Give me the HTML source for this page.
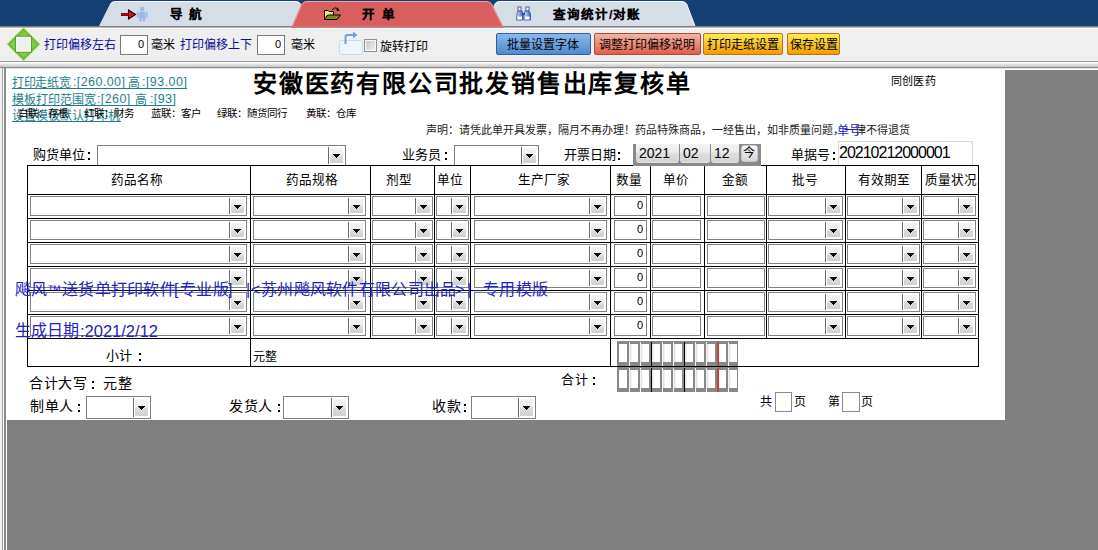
<!DOCTYPE html>
<html lang="zh-CN"><head><meta charset="utf-8">
<style>
html,body{margin:0;padding:0}
body{width:1098px;height:550px;position:relative;overflow:hidden;background:#efefef;font-family:"Liberation Sans",sans-serif}
.t{position:absolute;white-space:nowrap;line-height:1;margin-top:1px}
.tri{position:absolute;width:0;height:0;border-left:3.5px solid transparent;border-right:3.5px solid transparent;border-top:4px solid #000}
</style></head><body>

<div style="position:absolute;left:0px;top:0px;width:1098px;height:26px;box-sizing:border-box;background:#143f72"></div>
<svg style="position:absolute;left:0;top:0" width="1098" height="30">
<path d="M99,26 L110,4 Q112,1 116,1 L295,1 Q299,1 301,4 L311,26 Z" fill="#d5dde6"/>
<path d="M110.5,4 Q112.5,1.5 116,1.5 L295,1.5 Q298.5,1.5 300.5,4" stroke="#f7f9fc" stroke-width="1" fill="none"/>
<path d="M484,26 L494,5 Q496,1 500,1 L681,1 Q685,1 687,4 L695,26 Z" fill="#d5dde6"/>
<path d="M494.5,5 Q496.5,1.5 500,1.5 L681,1.5 Q684.5,1.5 686.5,4 L695,26" stroke="#f7f9fc" stroke-width="1" fill="none"/>
<path d="M292,26 L301,5 Q303,1 307,1 L486,1 Q490,1 492,4 L503,26 Z" fill="#d95f5e"/>
<path d="M292.5,26 L301.5,5 Q303.5,1.5 307,1.5 L486,1.5 Q489.5,1.5 491.5,4 L502.5,26" stroke="#eda4a3" stroke-width="1" fill="none"/>
</svg>
<div style="position:absolute;left:0px;top:26px;width:1098px;height:1px;box-sizing:border-box;background:#7b7d80"></div>
<div style="position:absolute;left:0px;top:27px;width:1098px;height:1px;box-sizing:border-box;background:#b9babc"></div>
<div style="position:absolute;left:291px;top:26px;width:213px;height:2px;box-sizing:border-box;background:#c97d7c"></div>
<div style="position:absolute;left:0px;top:28px;width:1098px;height:1px;box-sizing:border-box;background:#ffffff"></div>
<svg style="position:absolute;left:120px;top:6px" width="30" height="16" viewBox="0 0 30 16">
<rect x="1" y="7" width="8" height="3" fill="#600"/>
<rect x="1.5" y="7.6" width="7" height="1.8" fill="#c00"/>
<path d="M8.5,4 L15.5,8.5 L8.5,13 Z" fill="#e81010" stroke="#200" stroke-width="1.1" stroke-linejoin="miter"/>
<circle cx="22.3" cy="3" r="2.3" fill="#98bbe8"/>
<rect x="19.2" y="5.8" width="6.2" height="6.5" fill="#98bbe8"/>
<rect x="17" y="5.8" width="1.6" height="6" fill="#98bbe8"/>
<rect x="26" y="5.8" width="1.6" height="6" fill="#98bbe8"/>
<rect x="19.4" y="12" width="2.4" height="3.2" fill="#98bbe8"/>
<rect x="22.8" y="12" width="2.4" height="3.2" fill="#98bbe8"/>
</svg>
<div class="t" style="left:170px;top:8px;font-size:12.5px;color:#000;font-weight:bold;-webkit-text-stroke:0.15px #000">导</div>
<div class="t" style="left:189px;top:8px;font-size:12.5px;color:#000;font-weight:bold;-webkit-text-stroke:0.15px #000">航</div>
<svg style="position:absolute;left:324px;top:6px" width="18" height="16" viewBox="0 0 18 16">
<defs><pattern id="hatch" width="2" height="2" patternUnits="userSpaceOnUse"><rect width="2" height="2" fill="#f0d860"/><rect width="1" height="1" fill="#fff8b0"/><rect x="1" y="1" width="1" height="1" fill="#fff8b0"/></pattern></defs>
<path d="M0.5,4.5 L4,4.5 L5,5.5 L9.5,5.5 L9.5,13.5 L0.5,13.5 Z" fill="url(#hatch)" stroke="#000" stroke-width="1"/>
<path d="M0.5,13.5 L3.5,9 L16.5,9 L13,13.5 Z" fill="#7e8a1c" stroke="#000" stroke-width="1"/>
<path d="M8,4 Q10.5,0.5 14,2.5" stroke="#000" stroke-width="1" fill="none"/>
<path d="M13,1.5 L16,4.5 L12.5,5 Z" fill="#000"/>
</svg>
<div class="t" style="left:362px;top:8px;font-size:12.5px;color:#000;font-weight:bold;-webkit-text-stroke:0.15px #000">开</div>
<div class="t" style="left:382px;top:8px;font-size:12.5px;color:#000;font-weight:bold;-webkit-text-stroke:0.15px #000">单</div>
<svg style="position:absolute;left:515px;top:6px" width="18" height="16" viewBox="0 0 18 16">
<defs><linearGradient id="bg1" x1="0" x2="1"><stop offset="0" stop-color="#dbe8fb"/><stop offset="0.5" stop-color="#7fa3e0"/><stop offset="1" stop-color="#3d62b8"/></linearGradient></defs>
<rect x="3" y="1" width="3" height="4" fill="#fff" stroke="#3a4f90" stroke-width="0.9"/>
<rect x="11" y="1" width="3" height="4" fill="#fff" stroke="#3a4f90" stroke-width="0.9"/>
<path d="M2,8 L3,5 L7,5 L8,8 L8,14 L1.5,14 Z" fill="url(#bg1)" stroke="#2e4a9a" stroke-width="0.8"/>
<path d="M9,8 L10,5 L14,5 L15.5,8 L15.5,14 L9,14 Z" fill="url(#bg1)" stroke="#2e4a9a" stroke-width="0.8"/>
<rect x="2.5" y="10.5" width="4.5" height="3" fill="#f4f8ff"/>
<rect x="10" y="10.5" width="4.5" height="3" fill="#f4f8ff"/>
<rect x="7" y="7" width="3" height="2" fill="#2e4a9a"/>
</svg>
<div class="t" style="left:553px;top:8px;font-size:12.5px;color:#000;font-weight:bold;-webkit-text-stroke:0.15px #000;letter-spacing:1px">查询统计/对账</div>
<svg style="position:absolute;left:6px;top:27px" width="36" height="36" viewBox="0 0 36 36">
<path d="M17.5,0.8 L34,17.3 L17.5,33.8 L1,17.3 Z" fill="#6cb832" stroke="#b6ec86" stroke-width="0.9"/>
<path d="M17.5,4 L24,10 L11,10 Z" fill="#84cc40"/>
<path d="M17.5,30.5 L24,24.5 L11,24.5 Z" fill="#84cc40"/>
<path d="M4,17.3 L10,11 L10,23.5 Z" fill="#84cc40"/>
<path d="M31,17.3 L25,11 L25,23.5 Z" fill="#84cc40"/>
<rect x="9.7" y="9.3" width="15.6" height="15.8" fill="#f0f0f0" stroke="#4e8f22" stroke-width="1"/>
<rect x="10.7" y="10.3" width="13.6" height="13.8" fill="none" stroke="#f4ffe8" stroke-width="1"/>
</svg>
<div class="t" style="left:44px;top:38px;font-size:12px;color:#0c0c98;">打印偏移左右</div>
<div style="position:absolute;left:120px;top:35px;width:28px;height:20px;box-sizing:border-box;border:1px solid #7a7a7a;background:#fff"></div>
<div class="t" style="left:138px;top:38px;font-size:11px;color:#000;">0</div>
<div class="t" style="left:151px;top:38px;font-size:12px;color:#000;">毫米</div>
<div class="t" style="left:180px;top:38px;font-size:12px;color:#0c0c98;">打印偏移上下</div>
<div style="position:absolute;left:257px;top:35px;width:28px;height:20px;box-sizing:border-box;border:1px solid #7a7a7a;background:#fff"></div>
<div class="t" style="left:275px;top:38px;font-size:11px;color:#000;">0</div>
<div class="t" style="left:291px;top:38px;font-size:12px;color:#000;">毫米</div>
<svg style="position:absolute;left:338px;top:30px" width="26" height="26" viewBox="0 0 26 26">
<rect x="1.5" y="10.5" width="23" height="14" rx="2" fill="#eef4fb" stroke="#cfd9e5"/>
<path d="M7.5,14 L7.5,7 Q7.5,5 9.5,5 L16,5" stroke="#6f9fd6" stroke-width="2" fill="none"/>
<path d="M15,1.5 L19.5,5 L15,8.5 Z" fill="#6f9fd6"/>
</svg>
<div style="position:absolute;left:364px;top:39px;width:13px;height:13px;box-sizing:border-box;border:1px solid #8f8f8f;background:linear-gradient(135deg,#d0d0d0,#f4f4f4)"></div>
<div style="position:absolute;left:365px;top:40px;width:11px;height:11px;box-sizing:border-box;border:1px solid #f8f8f8;background:linear-gradient(135deg,#c8c8c8,#f0f0f0)"></div>
<div class="t" style="left:380px;top:40px;font-size:12px;color:#000;">旋转打印</div>
<div style="position:absolute;left:496px;top:33px;width:95px;height:22px;box-sizing:border-box;border:1px solid #2f5e9a;border-radius:2px;background:linear-gradient(#8ab8ea,#4f8bd2)"></div><div class="t" style="left:507px;top:38px;font-size:12px;color:#000;">批量设置字体</div>
<div style="position:absolute;left:594px;top:33px;width:107px;height:22px;box-sizing:border-box;border:1px solid #b04a38;border-radius:2px;background:linear-gradient(#f4b4a4,#e0604a)"></div><div class="t" style="left:599px;top:38px;font-size:12px;color:#000;">调整打印偏移说明</div>
<div style="position:absolute;left:703px;top:33px;width:80px;height:22px;box-sizing:border-box;border:1px solid #b8741e;border-radius:2px;background:linear-gradient(#ffec50,#f59a00)"></div><div class="t" style="left:707px;top:38px;font-size:12px;color:#000;">打印走纸设置</div>
<div style="position:absolute;left:787px;top:33px;width:53px;height:22px;box-sizing:border-box;border:1px solid #b8741e;border-radius:2px;background:linear-gradient(#ffec50,#f59a00)"></div><div class="t" style="left:790px;top:38px;font-size:12px;color:#000;">保存设置</div>
<div style="position:absolute;left:0px;top:61px;width:1098px;height:1px;box-sizing:border-box;background:#979797"></div>
<div style="position:absolute;left:0px;top:62px;width:1098px;height:1px;box-sizing:border-box;background:#ffffff"></div>
<div style="position:absolute;left:0px;top:63px;width:1098px;height:1px;box-sizing:border-box;background:#f1f0ec"></div>
<div style="position:absolute;left:0px;top:64px;width:1098px;height:1px;box-sizing:border-box;background:#e0e0e0"></div>
<div style="position:absolute;left:0px;top:65px;width:1098px;height:1px;box-sizing:border-box;background:#d6d6d6"></div>
<div style="position:absolute;left:0px;top:66px;width:1098px;height:1px;box-sizing:border-box;background:#cbcbcb"></div>
<div style="position:absolute;left:0px;top:67px;width:1098px;height:1px;box-sizing:border-box;background:#8a8a8a"></div>
<div style="position:absolute;left:0px;top:68px;width:1098px;height:1px;box-sizing:border-box;background:#e6e6e6"></div>
<div style="position:absolute;left:0px;top:69px;width:1098px;height:481px;box-sizing:border-box;background:#808080"></div>
<div style="position:absolute;left:0px;top:69px;width:2px;height:481px;box-sizing:border-box;background:#f0f0f0"></div>
<div style="position:absolute;left:2px;top:66px;width:1px;height:484px;box-sizing:border-box;background:#a0a0a0"></div>
<div style="position:absolute;left:3px;top:69px;width:1px;height:481px;box-sizing:border-box;background:#ffffff"></div>
<div style="position:absolute;left:4px;top:67px;width:2px;height:483px;box-sizing:border-box;background:#8a8a8a"></div>
<div style="position:absolute;left:6px;top:69px;width:1px;height:481px;box-sizing:border-box;background:#ffffff"></div>
<div style="position:absolute;left:7px;top:69px;width:998px;height:351px;box-sizing:border-box;background:#ffffff"></div>
<div style="position:absolute;left:7px;top:69px;width:1091px;height:1px;box-sizing:border-box;background:#ffffff"></div>
<div class="t" style="left:253px;top:71px;font-size:24px;color:#000;font-family:'Liberation Serif',serif;font-weight:bold;letter-spacing:1.8px">安徽医药有限公司批发销售出库复核单</div>
<div class="t" style="left:891px;top:75px;font-size:11px;color:#000;letter-spacing:0.2px">同创医药</div>
<div class="t" style="left:12px;top:76px;font-size:12px;color:#1f7f8c;letter-spacing:-0.3px">打印走纸宽</div>
<div class="t" style="left:73px;top:75px;font-size:12.5px;color:#1f7f8c;letter-spacing:0.4px">:[260.00]</div>
<div class="t" style="left:128px;top:76px;font-size:12px;color:#1f7f8c;">高</div>
<div class="t" style="left:142px;top:75px;font-size:12.5px;color:#1f7f8c;letter-spacing:0.45px">:[93.00]</div>
<div style="position:absolute;left:12px;top:88px;width:175px;height:1px;box-sizing:border-box;background:#1f7f8c"></div>
<div class="t" style="left:12px;top:93px;font-size:12px;color:#1f7f8c;">模板打印范围宽</div>
<div class="t" style="left:97px;top:92px;font-size:12.5px;color:#1f7f8c;letter-spacing:0.4px">:[260]</div>
<div class="t" style="left:135px;top:93px;font-size:12px;color:#1f7f8c;">高</div>
<div class="t" style="left:150px;top:92px;font-size:12.5px;color:#1f7f8c;letter-spacing:0.4px">:[93]</div>
<div style="position:absolute;left:12px;top:105px;width:163px;height:1px;box-sizing:border-box;background:#1f7f8c"></div>
<div class="t" style="left:12px;top:109px;font-size:12px;color:#1f7f8c;">设置模板默认打印机</div>
<div style="position:absolute;left:12px;top:121px;width:109px;height:1px;box-sizing:border-box;background:#1f7f8c"></div>
<div class="t" style="left:18px;top:107px;font-size:10.5px;color:#000;">白联：存根</div>
<div class="t" style="left:84px;top:107px;font-size:10.5px;color:#000;">红联：财务</div>
<div class="t" style="left:151px;top:107px;font-size:10.5px;color:#000;">蓝联：客户</div>
<div class="t" style="left:217px;top:107px;font-size:10.5px;color:#000;">绿联：随货同行</div>
<div class="t" style="left:306px;top:107px;font-size:10.5px;color:#000;">黄联：仓库</div>
<div class="t" style="left:426px;top:123px;font-size:11px;color:#222;letter-spacing:0px;margin-top:2px">声明：请凭此单开具发票，隔月不再办理！药品特殊商品，一经售出，如非质量问题，一律不得退货</div>
<div class="t" style="left:837px;top:124px;font-size:12px;color:#1c1cc8;">单号</div>
<div class="t" style="left:33px;top:147px;font-size:13px;color:#000;">购货单位</div><div style="position:absolute;left:88px;top:152px;width:2px;height:2px;box-sizing:border-box;background:#000"></div><div style="position:absolute;left:88px;top:158px;width:2px;height:2px;box-sizing:border-box;background:#000"></div>
<div style="position:absolute;left:97px;top:145px;width:249px;height:21px;box-sizing:border-box;border:1px solid #808080;background:#fff"></div><div style="position:absolute;left:328px;top:147px;width:1px;height:17px;box-sizing:border-box;background:#6a6a6a"></div><div style="position:absolute;left:330px;top:148px;width:13px;height:15px;box-sizing:border-box;background:linear-gradient(#f4f4f4,#ededed 45%,#dcdcdc 55%,#d0d0d0)"></div><div style="position:absolute;left:333px;top:154px;width:7px;height:1px;box-sizing:border-box;background:#000"></div><div style="position:absolute;left:334px;top:155px;width:5px;height:1px;box-sizing:border-box;background:#000"></div><div style="position:absolute;left:335px;top:156px;width:3px;height:1px;box-sizing:border-box;background:#000"></div><div style="position:absolute;left:336px;top:157px;width:1px;height:1px;box-sizing:border-box;background:#000"></div>
<div class="t" style="left:402px;top:147px;font-size:13px;color:#000;">业务员</div><div style="position:absolute;left:445px;top:152px;width:2px;height:2px;box-sizing:border-box;background:#000"></div><div style="position:absolute;left:445px;top:158px;width:2px;height:2px;box-sizing:border-box;background:#000"></div>
<div style="position:absolute;left:454px;top:145px;width:85px;height:21px;box-sizing:border-box;border:1px solid #808080;background:#fff"></div><div style="position:absolute;left:521px;top:147px;width:1px;height:17px;box-sizing:border-box;background:#6a6a6a"></div><div style="position:absolute;left:523px;top:148px;width:13px;height:15px;box-sizing:border-box;background:linear-gradient(#f4f4f4,#ededed 45%,#dcdcdc 55%,#d0d0d0)"></div><div style="position:absolute;left:526px;top:154px;width:7px;height:1px;box-sizing:border-box;background:#000"></div><div style="position:absolute;left:527px;top:155px;width:5px;height:1px;box-sizing:border-box;background:#000"></div><div style="position:absolute;left:528px;top:156px;width:3px;height:1px;box-sizing:border-box;background:#000"></div><div style="position:absolute;left:529px;top:157px;width:1px;height:1px;box-sizing:border-box;background:#000"></div>
<div class="t" style="left:564px;top:147px;font-size:13px;color:#000;">开票日期</div><div style="position:absolute;left:618px;top:152px;width:2px;height:2px;box-sizing:border-box;background:#000"></div><div style="position:absolute;left:618px;top:158px;width:2px;height:2px;box-sizing:border-box;background:#000"></div>
<div class="t" style="left:791px;top:147px;font-size:13px;color:#000;">单据号</div><div style="position:absolute;left:833px;top:152px;width:2px;height:2px;box-sizing:border-box;background:#000"></div><div style="position:absolute;left:833px;top:158px;width:2px;height:2px;box-sizing:border-box;background:#000"></div>
<div style="position:absolute;left:838px;top:141px;width:135px;height:25px;box-sizing:border-box;border:1px solid #d6d6d6;background:#fff"></div>
<div class="t" style="left:839px;top:144px;font-size:16px;color:#000;letter-spacing:-1px">20210212000001</div>
<div style="position:absolute;left:30px;top:196px;width:217px;height:20px;box-sizing:border-box;border:1px solid #808080;background:#fff"></div><div style="position:absolute;left:229px;top:198px;width:1px;height:16px;box-sizing:border-box;background:#6a6a6a"></div><div style="position:absolute;left:231px;top:199px;width:13px;height:14px;box-sizing:border-box;background:linear-gradient(#f4f4f4,#ededed 45%,#dcdcdc 55%,#d0d0d0)"></div><div style="position:absolute;left:234px;top:205px;width:7px;height:1px;box-sizing:border-box;background:#000"></div><div style="position:absolute;left:235px;top:206px;width:5px;height:1px;box-sizing:border-box;background:#000"></div><div style="position:absolute;left:236px;top:207px;width:3px;height:1px;box-sizing:border-box;background:#000"></div><div style="position:absolute;left:237px;top:208px;width:1px;height:1px;box-sizing:border-box;background:#000"></div>
<div style="position:absolute;left:253px;top:196px;width:113px;height:20px;box-sizing:border-box;border:1px solid #808080;background:#fff"></div><div style="position:absolute;left:348px;top:198px;width:1px;height:16px;box-sizing:border-box;background:#6a6a6a"></div><div style="position:absolute;left:350px;top:199px;width:13px;height:14px;box-sizing:border-box;background:linear-gradient(#f4f4f4,#ededed 45%,#dcdcdc 55%,#d0d0d0)"></div><div style="position:absolute;left:353px;top:205px;width:7px;height:1px;box-sizing:border-box;background:#000"></div><div style="position:absolute;left:354px;top:206px;width:5px;height:1px;box-sizing:border-box;background:#000"></div><div style="position:absolute;left:355px;top:207px;width:3px;height:1px;box-sizing:border-box;background:#000"></div><div style="position:absolute;left:356px;top:208px;width:1px;height:1px;box-sizing:border-box;background:#000"></div>
<div style="position:absolute;left:372px;top:196px;width:61px;height:20px;box-sizing:border-box;border:1px solid #808080;background:#fff"></div><div style="position:absolute;left:415px;top:198px;width:1px;height:16px;box-sizing:border-box;background:#6a6a6a"></div><div style="position:absolute;left:417px;top:199px;width:13px;height:14px;box-sizing:border-box;background:linear-gradient(#f4f4f4,#ededed 45%,#dcdcdc 55%,#d0d0d0)"></div><div style="position:absolute;left:420px;top:205px;width:7px;height:1px;box-sizing:border-box;background:#000"></div><div style="position:absolute;left:421px;top:206px;width:5px;height:1px;box-sizing:border-box;background:#000"></div><div style="position:absolute;left:422px;top:207px;width:3px;height:1px;box-sizing:border-box;background:#000"></div><div style="position:absolute;left:423px;top:208px;width:1px;height:1px;box-sizing:border-box;background:#000"></div>
<div style="position:absolute;left:436px;top:196px;width:33px;height:20px;box-sizing:border-box;border:1px solid #808080;background:#fff"></div><div style="position:absolute;left:451px;top:198px;width:1px;height:16px;box-sizing:border-box;background:#6a6a6a"></div><div style="position:absolute;left:453px;top:199px;width:13px;height:14px;box-sizing:border-box;background:linear-gradient(#f4f4f4,#ededed 45%,#dcdcdc 55%,#d0d0d0)"></div><div style="position:absolute;left:456px;top:205px;width:7px;height:1px;box-sizing:border-box;background:#000"></div><div style="position:absolute;left:457px;top:206px;width:5px;height:1px;box-sizing:border-box;background:#000"></div><div style="position:absolute;left:458px;top:207px;width:3px;height:1px;box-sizing:border-box;background:#000"></div><div style="position:absolute;left:459px;top:208px;width:1px;height:1px;box-sizing:border-box;background:#000"></div>
<div style="position:absolute;left:474px;top:196px;width:133px;height:20px;box-sizing:border-box;border:1px solid #808080;background:#fff"></div><div style="position:absolute;left:589px;top:198px;width:1px;height:16px;box-sizing:border-box;background:#6a6a6a"></div><div style="position:absolute;left:591px;top:199px;width:13px;height:14px;box-sizing:border-box;background:linear-gradient(#f4f4f4,#ededed 45%,#dcdcdc 55%,#d0d0d0)"></div><div style="position:absolute;left:594px;top:205px;width:7px;height:1px;box-sizing:border-box;background:#000"></div><div style="position:absolute;left:595px;top:206px;width:5px;height:1px;box-sizing:border-box;background:#000"></div><div style="position:absolute;left:596px;top:207px;width:3px;height:1px;box-sizing:border-box;background:#000"></div><div style="position:absolute;left:597px;top:208px;width:1px;height:1px;box-sizing:border-box;background:#000"></div>
<div style="position:absolute;left:614px;top:196px;width:33px;height:20px;box-sizing:border-box;border:1px solid #808080;background:#fff"></div>
<div class="t" style="left:637px;top:199px;font-size:11px;color:#000;">0</div>
<div style="position:absolute;left:652px;top:196px;width:49px;height:20px;box-sizing:border-box;border:1px solid #808080;background:#fff"></div>
<div style="position:absolute;left:707px;top:196px;width:58px;height:20px;box-sizing:border-box;border:1px solid #808080;background:#fff"></div>
<div style="position:absolute;left:768px;top:196px;width:75px;height:20px;box-sizing:border-box;border:1px solid #808080;background:#fff"></div><div style="position:absolute;left:825px;top:198px;width:1px;height:16px;box-sizing:border-box;background:#6a6a6a"></div><div style="position:absolute;left:827px;top:199px;width:13px;height:14px;box-sizing:border-box;background:linear-gradient(#f4f4f4,#ededed 45%,#dcdcdc 55%,#d0d0d0)"></div><div style="position:absolute;left:830px;top:205px;width:7px;height:1px;box-sizing:border-box;background:#000"></div><div style="position:absolute;left:831px;top:206px;width:5px;height:1px;box-sizing:border-box;background:#000"></div><div style="position:absolute;left:832px;top:207px;width:3px;height:1px;box-sizing:border-box;background:#000"></div><div style="position:absolute;left:833px;top:208px;width:1px;height:1px;box-sizing:border-box;background:#000"></div>
<div style="position:absolute;left:847px;top:196px;width:73px;height:20px;box-sizing:border-box;border:1px solid #808080;background:#fff"></div><div style="position:absolute;left:902px;top:198px;width:1px;height:16px;box-sizing:border-box;background:#6a6a6a"></div><div style="position:absolute;left:904px;top:199px;width:13px;height:14px;box-sizing:border-box;background:linear-gradient(#f4f4f4,#ededed 45%,#dcdcdc 55%,#d0d0d0)"></div><div style="position:absolute;left:907px;top:205px;width:7px;height:1px;box-sizing:border-box;background:#000"></div><div style="position:absolute;left:908px;top:206px;width:5px;height:1px;box-sizing:border-box;background:#000"></div><div style="position:absolute;left:909px;top:207px;width:3px;height:1px;box-sizing:border-box;background:#000"></div><div style="position:absolute;left:910px;top:208px;width:1px;height:1px;box-sizing:border-box;background:#000"></div>
<div style="position:absolute;left:923px;top:196px;width:53px;height:20px;box-sizing:border-box;border:1px solid #808080;background:#fff"></div><div style="position:absolute;left:958px;top:198px;width:1px;height:16px;box-sizing:border-box;background:#6a6a6a"></div><div style="position:absolute;left:960px;top:199px;width:13px;height:14px;box-sizing:border-box;background:linear-gradient(#f4f4f4,#ededed 45%,#dcdcdc 55%,#d0d0d0)"></div><div style="position:absolute;left:963px;top:205px;width:7px;height:1px;box-sizing:border-box;background:#000"></div><div style="position:absolute;left:964px;top:206px;width:5px;height:1px;box-sizing:border-box;background:#000"></div><div style="position:absolute;left:965px;top:207px;width:3px;height:1px;box-sizing:border-box;background:#000"></div><div style="position:absolute;left:966px;top:208px;width:1px;height:1px;box-sizing:border-box;background:#000"></div>
<div style="position:absolute;left:30px;top:220px;width:217px;height:20px;box-sizing:border-box;border:1px solid #808080;background:#fff"></div><div style="position:absolute;left:229px;top:222px;width:1px;height:16px;box-sizing:border-box;background:#6a6a6a"></div><div style="position:absolute;left:231px;top:223px;width:13px;height:14px;box-sizing:border-box;background:linear-gradient(#f4f4f4,#ededed 45%,#dcdcdc 55%,#d0d0d0)"></div><div style="position:absolute;left:234px;top:229px;width:7px;height:1px;box-sizing:border-box;background:#000"></div><div style="position:absolute;left:235px;top:230px;width:5px;height:1px;box-sizing:border-box;background:#000"></div><div style="position:absolute;left:236px;top:231px;width:3px;height:1px;box-sizing:border-box;background:#000"></div><div style="position:absolute;left:237px;top:232px;width:1px;height:1px;box-sizing:border-box;background:#000"></div>
<div style="position:absolute;left:253px;top:220px;width:113px;height:20px;box-sizing:border-box;border:1px solid #808080;background:#fff"></div><div style="position:absolute;left:348px;top:222px;width:1px;height:16px;box-sizing:border-box;background:#6a6a6a"></div><div style="position:absolute;left:350px;top:223px;width:13px;height:14px;box-sizing:border-box;background:linear-gradient(#f4f4f4,#ededed 45%,#dcdcdc 55%,#d0d0d0)"></div><div style="position:absolute;left:353px;top:229px;width:7px;height:1px;box-sizing:border-box;background:#000"></div><div style="position:absolute;left:354px;top:230px;width:5px;height:1px;box-sizing:border-box;background:#000"></div><div style="position:absolute;left:355px;top:231px;width:3px;height:1px;box-sizing:border-box;background:#000"></div><div style="position:absolute;left:356px;top:232px;width:1px;height:1px;box-sizing:border-box;background:#000"></div>
<div style="position:absolute;left:372px;top:220px;width:61px;height:20px;box-sizing:border-box;border:1px solid #808080;background:#fff"></div><div style="position:absolute;left:415px;top:222px;width:1px;height:16px;box-sizing:border-box;background:#6a6a6a"></div><div style="position:absolute;left:417px;top:223px;width:13px;height:14px;box-sizing:border-box;background:linear-gradient(#f4f4f4,#ededed 45%,#dcdcdc 55%,#d0d0d0)"></div><div style="position:absolute;left:420px;top:229px;width:7px;height:1px;box-sizing:border-box;background:#000"></div><div style="position:absolute;left:421px;top:230px;width:5px;height:1px;box-sizing:border-box;background:#000"></div><div style="position:absolute;left:422px;top:231px;width:3px;height:1px;box-sizing:border-box;background:#000"></div><div style="position:absolute;left:423px;top:232px;width:1px;height:1px;box-sizing:border-box;background:#000"></div>
<div style="position:absolute;left:436px;top:220px;width:33px;height:20px;box-sizing:border-box;border:1px solid #808080;background:#fff"></div><div style="position:absolute;left:451px;top:222px;width:1px;height:16px;box-sizing:border-box;background:#6a6a6a"></div><div style="position:absolute;left:453px;top:223px;width:13px;height:14px;box-sizing:border-box;background:linear-gradient(#f4f4f4,#ededed 45%,#dcdcdc 55%,#d0d0d0)"></div><div style="position:absolute;left:456px;top:229px;width:7px;height:1px;box-sizing:border-box;background:#000"></div><div style="position:absolute;left:457px;top:230px;width:5px;height:1px;box-sizing:border-box;background:#000"></div><div style="position:absolute;left:458px;top:231px;width:3px;height:1px;box-sizing:border-box;background:#000"></div><div style="position:absolute;left:459px;top:232px;width:1px;height:1px;box-sizing:border-box;background:#000"></div>
<div style="position:absolute;left:474px;top:220px;width:133px;height:20px;box-sizing:border-box;border:1px solid #808080;background:#fff"></div><div style="position:absolute;left:589px;top:222px;width:1px;height:16px;box-sizing:border-box;background:#6a6a6a"></div><div style="position:absolute;left:591px;top:223px;width:13px;height:14px;box-sizing:border-box;background:linear-gradient(#f4f4f4,#ededed 45%,#dcdcdc 55%,#d0d0d0)"></div><div style="position:absolute;left:594px;top:229px;width:7px;height:1px;box-sizing:border-box;background:#000"></div><div style="position:absolute;left:595px;top:230px;width:5px;height:1px;box-sizing:border-box;background:#000"></div><div style="position:absolute;left:596px;top:231px;width:3px;height:1px;box-sizing:border-box;background:#000"></div><div style="position:absolute;left:597px;top:232px;width:1px;height:1px;box-sizing:border-box;background:#000"></div>
<div style="position:absolute;left:614px;top:220px;width:33px;height:20px;box-sizing:border-box;border:1px solid #808080;background:#fff"></div>
<div class="t" style="left:637px;top:223px;font-size:11px;color:#000;">0</div>
<div style="position:absolute;left:652px;top:220px;width:49px;height:20px;box-sizing:border-box;border:1px solid #808080;background:#fff"></div>
<div style="position:absolute;left:707px;top:220px;width:58px;height:20px;box-sizing:border-box;border:1px solid #808080;background:#fff"></div>
<div style="position:absolute;left:768px;top:220px;width:75px;height:20px;box-sizing:border-box;border:1px solid #808080;background:#fff"></div><div style="position:absolute;left:825px;top:222px;width:1px;height:16px;box-sizing:border-box;background:#6a6a6a"></div><div style="position:absolute;left:827px;top:223px;width:13px;height:14px;box-sizing:border-box;background:linear-gradient(#f4f4f4,#ededed 45%,#dcdcdc 55%,#d0d0d0)"></div><div style="position:absolute;left:830px;top:229px;width:7px;height:1px;box-sizing:border-box;background:#000"></div><div style="position:absolute;left:831px;top:230px;width:5px;height:1px;box-sizing:border-box;background:#000"></div><div style="position:absolute;left:832px;top:231px;width:3px;height:1px;box-sizing:border-box;background:#000"></div><div style="position:absolute;left:833px;top:232px;width:1px;height:1px;box-sizing:border-box;background:#000"></div>
<div style="position:absolute;left:847px;top:220px;width:73px;height:20px;box-sizing:border-box;border:1px solid #808080;background:#fff"></div><div style="position:absolute;left:902px;top:222px;width:1px;height:16px;box-sizing:border-box;background:#6a6a6a"></div><div style="position:absolute;left:904px;top:223px;width:13px;height:14px;box-sizing:border-box;background:linear-gradient(#f4f4f4,#ededed 45%,#dcdcdc 55%,#d0d0d0)"></div><div style="position:absolute;left:907px;top:229px;width:7px;height:1px;box-sizing:border-box;background:#000"></div><div style="position:absolute;left:908px;top:230px;width:5px;height:1px;box-sizing:border-box;background:#000"></div><div style="position:absolute;left:909px;top:231px;width:3px;height:1px;box-sizing:border-box;background:#000"></div><div style="position:absolute;left:910px;top:232px;width:1px;height:1px;box-sizing:border-box;background:#000"></div>
<div style="position:absolute;left:923px;top:220px;width:53px;height:20px;box-sizing:border-box;border:1px solid #808080;background:#fff"></div><div style="position:absolute;left:958px;top:222px;width:1px;height:16px;box-sizing:border-box;background:#6a6a6a"></div><div style="position:absolute;left:960px;top:223px;width:13px;height:14px;box-sizing:border-box;background:linear-gradient(#f4f4f4,#ededed 45%,#dcdcdc 55%,#d0d0d0)"></div><div style="position:absolute;left:963px;top:229px;width:7px;height:1px;box-sizing:border-box;background:#000"></div><div style="position:absolute;left:964px;top:230px;width:5px;height:1px;box-sizing:border-box;background:#000"></div><div style="position:absolute;left:965px;top:231px;width:3px;height:1px;box-sizing:border-box;background:#000"></div><div style="position:absolute;left:966px;top:232px;width:1px;height:1px;box-sizing:border-box;background:#000"></div>
<div style="position:absolute;left:30px;top:244px;width:217px;height:20px;box-sizing:border-box;border:1px solid #808080;background:#fff"></div><div style="position:absolute;left:229px;top:246px;width:1px;height:16px;box-sizing:border-box;background:#6a6a6a"></div><div style="position:absolute;left:231px;top:247px;width:13px;height:14px;box-sizing:border-box;background:linear-gradient(#f4f4f4,#ededed 45%,#dcdcdc 55%,#d0d0d0)"></div><div style="position:absolute;left:234px;top:253px;width:7px;height:1px;box-sizing:border-box;background:#000"></div><div style="position:absolute;left:235px;top:254px;width:5px;height:1px;box-sizing:border-box;background:#000"></div><div style="position:absolute;left:236px;top:255px;width:3px;height:1px;box-sizing:border-box;background:#000"></div><div style="position:absolute;left:237px;top:256px;width:1px;height:1px;box-sizing:border-box;background:#000"></div>
<div style="position:absolute;left:253px;top:244px;width:113px;height:20px;box-sizing:border-box;border:1px solid #808080;background:#fff"></div><div style="position:absolute;left:348px;top:246px;width:1px;height:16px;box-sizing:border-box;background:#6a6a6a"></div><div style="position:absolute;left:350px;top:247px;width:13px;height:14px;box-sizing:border-box;background:linear-gradient(#f4f4f4,#ededed 45%,#dcdcdc 55%,#d0d0d0)"></div><div style="position:absolute;left:353px;top:253px;width:7px;height:1px;box-sizing:border-box;background:#000"></div><div style="position:absolute;left:354px;top:254px;width:5px;height:1px;box-sizing:border-box;background:#000"></div><div style="position:absolute;left:355px;top:255px;width:3px;height:1px;box-sizing:border-box;background:#000"></div><div style="position:absolute;left:356px;top:256px;width:1px;height:1px;box-sizing:border-box;background:#000"></div>
<div style="position:absolute;left:372px;top:244px;width:61px;height:20px;box-sizing:border-box;border:1px solid #808080;background:#fff"></div><div style="position:absolute;left:415px;top:246px;width:1px;height:16px;box-sizing:border-box;background:#6a6a6a"></div><div style="position:absolute;left:417px;top:247px;width:13px;height:14px;box-sizing:border-box;background:linear-gradient(#f4f4f4,#ededed 45%,#dcdcdc 55%,#d0d0d0)"></div><div style="position:absolute;left:420px;top:253px;width:7px;height:1px;box-sizing:border-box;background:#000"></div><div style="position:absolute;left:421px;top:254px;width:5px;height:1px;box-sizing:border-box;background:#000"></div><div style="position:absolute;left:422px;top:255px;width:3px;height:1px;box-sizing:border-box;background:#000"></div><div style="position:absolute;left:423px;top:256px;width:1px;height:1px;box-sizing:border-box;background:#000"></div>
<div style="position:absolute;left:436px;top:244px;width:33px;height:20px;box-sizing:border-box;border:1px solid #808080;background:#fff"></div><div style="position:absolute;left:451px;top:246px;width:1px;height:16px;box-sizing:border-box;background:#6a6a6a"></div><div style="position:absolute;left:453px;top:247px;width:13px;height:14px;box-sizing:border-box;background:linear-gradient(#f4f4f4,#ededed 45%,#dcdcdc 55%,#d0d0d0)"></div><div style="position:absolute;left:456px;top:253px;width:7px;height:1px;box-sizing:border-box;background:#000"></div><div style="position:absolute;left:457px;top:254px;width:5px;height:1px;box-sizing:border-box;background:#000"></div><div style="position:absolute;left:458px;top:255px;width:3px;height:1px;box-sizing:border-box;background:#000"></div><div style="position:absolute;left:459px;top:256px;width:1px;height:1px;box-sizing:border-box;background:#000"></div>
<div style="position:absolute;left:474px;top:244px;width:133px;height:20px;box-sizing:border-box;border:1px solid #808080;background:#fff"></div><div style="position:absolute;left:589px;top:246px;width:1px;height:16px;box-sizing:border-box;background:#6a6a6a"></div><div style="position:absolute;left:591px;top:247px;width:13px;height:14px;box-sizing:border-box;background:linear-gradient(#f4f4f4,#ededed 45%,#dcdcdc 55%,#d0d0d0)"></div><div style="position:absolute;left:594px;top:253px;width:7px;height:1px;box-sizing:border-box;background:#000"></div><div style="position:absolute;left:595px;top:254px;width:5px;height:1px;box-sizing:border-box;background:#000"></div><div style="position:absolute;left:596px;top:255px;width:3px;height:1px;box-sizing:border-box;background:#000"></div><div style="position:absolute;left:597px;top:256px;width:1px;height:1px;box-sizing:border-box;background:#000"></div>
<div style="position:absolute;left:614px;top:244px;width:33px;height:20px;box-sizing:border-box;border:1px solid #808080;background:#fff"></div>
<div class="t" style="left:637px;top:247px;font-size:11px;color:#000;">0</div>
<div style="position:absolute;left:652px;top:244px;width:49px;height:20px;box-sizing:border-box;border:1px solid #808080;background:#fff"></div>
<div style="position:absolute;left:707px;top:244px;width:58px;height:20px;box-sizing:border-box;border:1px solid #808080;background:#fff"></div>
<div style="position:absolute;left:768px;top:244px;width:75px;height:20px;box-sizing:border-box;border:1px solid #808080;background:#fff"></div><div style="position:absolute;left:825px;top:246px;width:1px;height:16px;box-sizing:border-box;background:#6a6a6a"></div><div style="position:absolute;left:827px;top:247px;width:13px;height:14px;box-sizing:border-box;background:linear-gradient(#f4f4f4,#ededed 45%,#dcdcdc 55%,#d0d0d0)"></div><div style="position:absolute;left:830px;top:253px;width:7px;height:1px;box-sizing:border-box;background:#000"></div><div style="position:absolute;left:831px;top:254px;width:5px;height:1px;box-sizing:border-box;background:#000"></div><div style="position:absolute;left:832px;top:255px;width:3px;height:1px;box-sizing:border-box;background:#000"></div><div style="position:absolute;left:833px;top:256px;width:1px;height:1px;box-sizing:border-box;background:#000"></div>
<div style="position:absolute;left:847px;top:244px;width:73px;height:20px;box-sizing:border-box;border:1px solid #808080;background:#fff"></div><div style="position:absolute;left:902px;top:246px;width:1px;height:16px;box-sizing:border-box;background:#6a6a6a"></div><div style="position:absolute;left:904px;top:247px;width:13px;height:14px;box-sizing:border-box;background:linear-gradient(#f4f4f4,#ededed 45%,#dcdcdc 55%,#d0d0d0)"></div><div style="position:absolute;left:907px;top:253px;width:7px;height:1px;box-sizing:border-box;background:#000"></div><div style="position:absolute;left:908px;top:254px;width:5px;height:1px;box-sizing:border-box;background:#000"></div><div style="position:absolute;left:909px;top:255px;width:3px;height:1px;box-sizing:border-box;background:#000"></div><div style="position:absolute;left:910px;top:256px;width:1px;height:1px;box-sizing:border-box;background:#000"></div>
<div style="position:absolute;left:923px;top:244px;width:53px;height:20px;box-sizing:border-box;border:1px solid #808080;background:#fff"></div><div style="position:absolute;left:958px;top:246px;width:1px;height:16px;box-sizing:border-box;background:#6a6a6a"></div><div style="position:absolute;left:960px;top:247px;width:13px;height:14px;box-sizing:border-box;background:linear-gradient(#f4f4f4,#ededed 45%,#dcdcdc 55%,#d0d0d0)"></div><div style="position:absolute;left:963px;top:253px;width:7px;height:1px;box-sizing:border-box;background:#000"></div><div style="position:absolute;left:964px;top:254px;width:5px;height:1px;box-sizing:border-box;background:#000"></div><div style="position:absolute;left:965px;top:255px;width:3px;height:1px;box-sizing:border-box;background:#000"></div><div style="position:absolute;left:966px;top:256px;width:1px;height:1px;box-sizing:border-box;background:#000"></div>
<div style="position:absolute;left:30px;top:268px;width:217px;height:20px;box-sizing:border-box;border:1px solid #808080;background:#fff"></div><div style="position:absolute;left:229px;top:270px;width:1px;height:16px;box-sizing:border-box;background:#6a6a6a"></div><div style="position:absolute;left:231px;top:271px;width:13px;height:14px;box-sizing:border-box;background:linear-gradient(#f4f4f4,#ededed 45%,#dcdcdc 55%,#d0d0d0)"></div><div style="position:absolute;left:234px;top:277px;width:7px;height:1px;box-sizing:border-box;background:#000"></div><div style="position:absolute;left:235px;top:278px;width:5px;height:1px;box-sizing:border-box;background:#000"></div><div style="position:absolute;left:236px;top:279px;width:3px;height:1px;box-sizing:border-box;background:#000"></div><div style="position:absolute;left:237px;top:280px;width:1px;height:1px;box-sizing:border-box;background:#000"></div>
<div style="position:absolute;left:253px;top:268px;width:113px;height:20px;box-sizing:border-box;border:1px solid #808080;background:#fff"></div><div style="position:absolute;left:348px;top:270px;width:1px;height:16px;box-sizing:border-box;background:#6a6a6a"></div><div style="position:absolute;left:350px;top:271px;width:13px;height:14px;box-sizing:border-box;background:linear-gradient(#f4f4f4,#ededed 45%,#dcdcdc 55%,#d0d0d0)"></div><div style="position:absolute;left:353px;top:277px;width:7px;height:1px;box-sizing:border-box;background:#000"></div><div style="position:absolute;left:354px;top:278px;width:5px;height:1px;box-sizing:border-box;background:#000"></div><div style="position:absolute;left:355px;top:279px;width:3px;height:1px;box-sizing:border-box;background:#000"></div><div style="position:absolute;left:356px;top:280px;width:1px;height:1px;box-sizing:border-box;background:#000"></div>
<div style="position:absolute;left:372px;top:268px;width:61px;height:20px;box-sizing:border-box;border:1px solid #808080;background:#fff"></div><div style="position:absolute;left:415px;top:270px;width:1px;height:16px;box-sizing:border-box;background:#6a6a6a"></div><div style="position:absolute;left:417px;top:271px;width:13px;height:14px;box-sizing:border-box;background:linear-gradient(#f4f4f4,#ededed 45%,#dcdcdc 55%,#d0d0d0)"></div><div style="position:absolute;left:420px;top:277px;width:7px;height:1px;box-sizing:border-box;background:#000"></div><div style="position:absolute;left:421px;top:278px;width:5px;height:1px;box-sizing:border-box;background:#000"></div><div style="position:absolute;left:422px;top:279px;width:3px;height:1px;box-sizing:border-box;background:#000"></div><div style="position:absolute;left:423px;top:280px;width:1px;height:1px;box-sizing:border-box;background:#000"></div>
<div style="position:absolute;left:436px;top:268px;width:33px;height:20px;box-sizing:border-box;border:1px solid #808080;background:#fff"></div><div style="position:absolute;left:451px;top:270px;width:1px;height:16px;box-sizing:border-box;background:#6a6a6a"></div><div style="position:absolute;left:453px;top:271px;width:13px;height:14px;box-sizing:border-box;background:linear-gradient(#f4f4f4,#ededed 45%,#dcdcdc 55%,#d0d0d0)"></div><div style="position:absolute;left:456px;top:277px;width:7px;height:1px;box-sizing:border-box;background:#000"></div><div style="position:absolute;left:457px;top:278px;width:5px;height:1px;box-sizing:border-box;background:#000"></div><div style="position:absolute;left:458px;top:279px;width:3px;height:1px;box-sizing:border-box;background:#000"></div><div style="position:absolute;left:459px;top:280px;width:1px;height:1px;box-sizing:border-box;background:#000"></div>
<div style="position:absolute;left:474px;top:268px;width:133px;height:20px;box-sizing:border-box;border:1px solid #808080;background:#fff"></div><div style="position:absolute;left:589px;top:270px;width:1px;height:16px;box-sizing:border-box;background:#6a6a6a"></div><div style="position:absolute;left:591px;top:271px;width:13px;height:14px;box-sizing:border-box;background:linear-gradient(#f4f4f4,#ededed 45%,#dcdcdc 55%,#d0d0d0)"></div><div style="position:absolute;left:594px;top:277px;width:7px;height:1px;box-sizing:border-box;background:#000"></div><div style="position:absolute;left:595px;top:278px;width:5px;height:1px;box-sizing:border-box;background:#000"></div><div style="position:absolute;left:596px;top:279px;width:3px;height:1px;box-sizing:border-box;background:#000"></div><div style="position:absolute;left:597px;top:280px;width:1px;height:1px;box-sizing:border-box;background:#000"></div>
<div style="position:absolute;left:614px;top:268px;width:33px;height:20px;box-sizing:border-box;border:1px solid #808080;background:#fff"></div>
<div class="t" style="left:637px;top:271px;font-size:11px;color:#000;">0</div>
<div style="position:absolute;left:652px;top:268px;width:49px;height:20px;box-sizing:border-box;border:1px solid #808080;background:#fff"></div>
<div style="position:absolute;left:707px;top:268px;width:58px;height:20px;box-sizing:border-box;border:1px solid #808080;background:#fff"></div>
<div style="position:absolute;left:768px;top:268px;width:75px;height:20px;box-sizing:border-box;border:1px solid #808080;background:#fff"></div><div style="position:absolute;left:825px;top:270px;width:1px;height:16px;box-sizing:border-box;background:#6a6a6a"></div><div style="position:absolute;left:827px;top:271px;width:13px;height:14px;box-sizing:border-box;background:linear-gradient(#f4f4f4,#ededed 45%,#dcdcdc 55%,#d0d0d0)"></div><div style="position:absolute;left:830px;top:277px;width:7px;height:1px;box-sizing:border-box;background:#000"></div><div style="position:absolute;left:831px;top:278px;width:5px;height:1px;box-sizing:border-box;background:#000"></div><div style="position:absolute;left:832px;top:279px;width:3px;height:1px;box-sizing:border-box;background:#000"></div><div style="position:absolute;left:833px;top:280px;width:1px;height:1px;box-sizing:border-box;background:#000"></div>
<div style="position:absolute;left:847px;top:268px;width:73px;height:20px;box-sizing:border-box;border:1px solid #808080;background:#fff"></div><div style="position:absolute;left:902px;top:270px;width:1px;height:16px;box-sizing:border-box;background:#6a6a6a"></div><div style="position:absolute;left:904px;top:271px;width:13px;height:14px;box-sizing:border-box;background:linear-gradient(#f4f4f4,#ededed 45%,#dcdcdc 55%,#d0d0d0)"></div><div style="position:absolute;left:907px;top:277px;width:7px;height:1px;box-sizing:border-box;background:#000"></div><div style="position:absolute;left:908px;top:278px;width:5px;height:1px;box-sizing:border-box;background:#000"></div><div style="position:absolute;left:909px;top:279px;width:3px;height:1px;box-sizing:border-box;background:#000"></div><div style="position:absolute;left:910px;top:280px;width:1px;height:1px;box-sizing:border-box;background:#000"></div>
<div style="position:absolute;left:923px;top:268px;width:53px;height:20px;box-sizing:border-box;border:1px solid #808080;background:#fff"></div><div style="position:absolute;left:958px;top:270px;width:1px;height:16px;box-sizing:border-box;background:#6a6a6a"></div><div style="position:absolute;left:960px;top:271px;width:13px;height:14px;box-sizing:border-box;background:linear-gradient(#f4f4f4,#ededed 45%,#dcdcdc 55%,#d0d0d0)"></div><div style="position:absolute;left:963px;top:277px;width:7px;height:1px;box-sizing:border-box;background:#000"></div><div style="position:absolute;left:964px;top:278px;width:5px;height:1px;box-sizing:border-box;background:#000"></div><div style="position:absolute;left:965px;top:279px;width:3px;height:1px;box-sizing:border-box;background:#000"></div><div style="position:absolute;left:966px;top:280px;width:1px;height:1px;box-sizing:border-box;background:#000"></div>
<div style="position:absolute;left:30px;top:292px;width:217px;height:20px;box-sizing:border-box;border:1px solid #808080;background:#fff"></div><div style="position:absolute;left:229px;top:294px;width:1px;height:16px;box-sizing:border-box;background:#6a6a6a"></div><div style="position:absolute;left:231px;top:295px;width:13px;height:14px;box-sizing:border-box;background:linear-gradient(#f4f4f4,#ededed 45%,#dcdcdc 55%,#d0d0d0)"></div><div style="position:absolute;left:234px;top:301px;width:7px;height:1px;box-sizing:border-box;background:#000"></div><div style="position:absolute;left:235px;top:302px;width:5px;height:1px;box-sizing:border-box;background:#000"></div><div style="position:absolute;left:236px;top:303px;width:3px;height:1px;box-sizing:border-box;background:#000"></div><div style="position:absolute;left:237px;top:304px;width:1px;height:1px;box-sizing:border-box;background:#000"></div>
<div style="position:absolute;left:253px;top:292px;width:113px;height:20px;box-sizing:border-box;border:1px solid #808080;background:#fff"></div><div style="position:absolute;left:348px;top:294px;width:1px;height:16px;box-sizing:border-box;background:#6a6a6a"></div><div style="position:absolute;left:350px;top:295px;width:13px;height:14px;box-sizing:border-box;background:linear-gradient(#f4f4f4,#ededed 45%,#dcdcdc 55%,#d0d0d0)"></div><div style="position:absolute;left:353px;top:301px;width:7px;height:1px;box-sizing:border-box;background:#000"></div><div style="position:absolute;left:354px;top:302px;width:5px;height:1px;box-sizing:border-box;background:#000"></div><div style="position:absolute;left:355px;top:303px;width:3px;height:1px;box-sizing:border-box;background:#000"></div><div style="position:absolute;left:356px;top:304px;width:1px;height:1px;box-sizing:border-box;background:#000"></div>
<div style="position:absolute;left:372px;top:292px;width:61px;height:20px;box-sizing:border-box;border:1px solid #808080;background:#fff"></div><div style="position:absolute;left:415px;top:294px;width:1px;height:16px;box-sizing:border-box;background:#6a6a6a"></div><div style="position:absolute;left:417px;top:295px;width:13px;height:14px;box-sizing:border-box;background:linear-gradient(#f4f4f4,#ededed 45%,#dcdcdc 55%,#d0d0d0)"></div><div style="position:absolute;left:420px;top:301px;width:7px;height:1px;box-sizing:border-box;background:#000"></div><div style="position:absolute;left:421px;top:302px;width:5px;height:1px;box-sizing:border-box;background:#000"></div><div style="position:absolute;left:422px;top:303px;width:3px;height:1px;box-sizing:border-box;background:#000"></div><div style="position:absolute;left:423px;top:304px;width:1px;height:1px;box-sizing:border-box;background:#000"></div>
<div style="position:absolute;left:436px;top:292px;width:33px;height:20px;box-sizing:border-box;border:1px solid #808080;background:#fff"></div><div style="position:absolute;left:451px;top:294px;width:1px;height:16px;box-sizing:border-box;background:#6a6a6a"></div><div style="position:absolute;left:453px;top:295px;width:13px;height:14px;box-sizing:border-box;background:linear-gradient(#f4f4f4,#ededed 45%,#dcdcdc 55%,#d0d0d0)"></div><div style="position:absolute;left:456px;top:301px;width:7px;height:1px;box-sizing:border-box;background:#000"></div><div style="position:absolute;left:457px;top:302px;width:5px;height:1px;box-sizing:border-box;background:#000"></div><div style="position:absolute;left:458px;top:303px;width:3px;height:1px;box-sizing:border-box;background:#000"></div><div style="position:absolute;left:459px;top:304px;width:1px;height:1px;box-sizing:border-box;background:#000"></div>
<div style="position:absolute;left:474px;top:292px;width:133px;height:20px;box-sizing:border-box;border:1px solid #808080;background:#fff"></div><div style="position:absolute;left:589px;top:294px;width:1px;height:16px;box-sizing:border-box;background:#6a6a6a"></div><div style="position:absolute;left:591px;top:295px;width:13px;height:14px;box-sizing:border-box;background:linear-gradient(#f4f4f4,#ededed 45%,#dcdcdc 55%,#d0d0d0)"></div><div style="position:absolute;left:594px;top:301px;width:7px;height:1px;box-sizing:border-box;background:#000"></div><div style="position:absolute;left:595px;top:302px;width:5px;height:1px;box-sizing:border-box;background:#000"></div><div style="position:absolute;left:596px;top:303px;width:3px;height:1px;box-sizing:border-box;background:#000"></div><div style="position:absolute;left:597px;top:304px;width:1px;height:1px;box-sizing:border-box;background:#000"></div>
<div style="position:absolute;left:614px;top:292px;width:33px;height:20px;box-sizing:border-box;border:1px solid #808080;background:#fff"></div>
<div class="t" style="left:637px;top:295px;font-size:11px;color:#000;">0</div>
<div style="position:absolute;left:652px;top:292px;width:49px;height:20px;box-sizing:border-box;border:1px solid #808080;background:#fff"></div>
<div style="position:absolute;left:707px;top:292px;width:58px;height:20px;box-sizing:border-box;border:1px solid #808080;background:#fff"></div>
<div style="position:absolute;left:768px;top:292px;width:75px;height:20px;box-sizing:border-box;border:1px solid #808080;background:#fff"></div><div style="position:absolute;left:825px;top:294px;width:1px;height:16px;box-sizing:border-box;background:#6a6a6a"></div><div style="position:absolute;left:827px;top:295px;width:13px;height:14px;box-sizing:border-box;background:linear-gradient(#f4f4f4,#ededed 45%,#dcdcdc 55%,#d0d0d0)"></div><div style="position:absolute;left:830px;top:301px;width:7px;height:1px;box-sizing:border-box;background:#000"></div><div style="position:absolute;left:831px;top:302px;width:5px;height:1px;box-sizing:border-box;background:#000"></div><div style="position:absolute;left:832px;top:303px;width:3px;height:1px;box-sizing:border-box;background:#000"></div><div style="position:absolute;left:833px;top:304px;width:1px;height:1px;box-sizing:border-box;background:#000"></div>
<div style="position:absolute;left:847px;top:292px;width:73px;height:20px;box-sizing:border-box;border:1px solid #808080;background:#fff"></div><div style="position:absolute;left:902px;top:294px;width:1px;height:16px;box-sizing:border-box;background:#6a6a6a"></div><div style="position:absolute;left:904px;top:295px;width:13px;height:14px;box-sizing:border-box;background:linear-gradient(#f4f4f4,#ededed 45%,#dcdcdc 55%,#d0d0d0)"></div><div style="position:absolute;left:907px;top:301px;width:7px;height:1px;box-sizing:border-box;background:#000"></div><div style="position:absolute;left:908px;top:302px;width:5px;height:1px;box-sizing:border-box;background:#000"></div><div style="position:absolute;left:909px;top:303px;width:3px;height:1px;box-sizing:border-box;background:#000"></div><div style="position:absolute;left:910px;top:304px;width:1px;height:1px;box-sizing:border-box;background:#000"></div>
<div style="position:absolute;left:923px;top:292px;width:53px;height:20px;box-sizing:border-box;border:1px solid #808080;background:#fff"></div><div style="position:absolute;left:958px;top:294px;width:1px;height:16px;box-sizing:border-box;background:#6a6a6a"></div><div style="position:absolute;left:960px;top:295px;width:13px;height:14px;box-sizing:border-box;background:linear-gradient(#f4f4f4,#ededed 45%,#dcdcdc 55%,#d0d0d0)"></div><div style="position:absolute;left:963px;top:301px;width:7px;height:1px;box-sizing:border-box;background:#000"></div><div style="position:absolute;left:964px;top:302px;width:5px;height:1px;box-sizing:border-box;background:#000"></div><div style="position:absolute;left:965px;top:303px;width:3px;height:1px;box-sizing:border-box;background:#000"></div><div style="position:absolute;left:966px;top:304px;width:1px;height:1px;box-sizing:border-box;background:#000"></div>
<div style="position:absolute;left:30px;top:316px;width:217px;height:20px;box-sizing:border-box;border:1px solid #808080;background:#fff"></div><div style="position:absolute;left:229px;top:318px;width:1px;height:16px;box-sizing:border-box;background:#6a6a6a"></div><div style="position:absolute;left:231px;top:319px;width:13px;height:14px;box-sizing:border-box;background:linear-gradient(#f4f4f4,#ededed 45%,#dcdcdc 55%,#d0d0d0)"></div><div style="position:absolute;left:234px;top:325px;width:7px;height:1px;box-sizing:border-box;background:#000"></div><div style="position:absolute;left:235px;top:326px;width:5px;height:1px;box-sizing:border-box;background:#000"></div><div style="position:absolute;left:236px;top:327px;width:3px;height:1px;box-sizing:border-box;background:#000"></div><div style="position:absolute;left:237px;top:328px;width:1px;height:1px;box-sizing:border-box;background:#000"></div>
<div style="position:absolute;left:253px;top:316px;width:113px;height:20px;box-sizing:border-box;border:1px solid #808080;background:#fff"></div><div style="position:absolute;left:348px;top:318px;width:1px;height:16px;box-sizing:border-box;background:#6a6a6a"></div><div style="position:absolute;left:350px;top:319px;width:13px;height:14px;box-sizing:border-box;background:linear-gradient(#f4f4f4,#ededed 45%,#dcdcdc 55%,#d0d0d0)"></div><div style="position:absolute;left:353px;top:325px;width:7px;height:1px;box-sizing:border-box;background:#000"></div><div style="position:absolute;left:354px;top:326px;width:5px;height:1px;box-sizing:border-box;background:#000"></div><div style="position:absolute;left:355px;top:327px;width:3px;height:1px;box-sizing:border-box;background:#000"></div><div style="position:absolute;left:356px;top:328px;width:1px;height:1px;box-sizing:border-box;background:#000"></div>
<div style="position:absolute;left:372px;top:316px;width:61px;height:20px;box-sizing:border-box;border:1px solid #808080;background:#fff"></div><div style="position:absolute;left:415px;top:318px;width:1px;height:16px;box-sizing:border-box;background:#6a6a6a"></div><div style="position:absolute;left:417px;top:319px;width:13px;height:14px;box-sizing:border-box;background:linear-gradient(#f4f4f4,#ededed 45%,#dcdcdc 55%,#d0d0d0)"></div><div style="position:absolute;left:420px;top:325px;width:7px;height:1px;box-sizing:border-box;background:#000"></div><div style="position:absolute;left:421px;top:326px;width:5px;height:1px;box-sizing:border-box;background:#000"></div><div style="position:absolute;left:422px;top:327px;width:3px;height:1px;box-sizing:border-box;background:#000"></div><div style="position:absolute;left:423px;top:328px;width:1px;height:1px;box-sizing:border-box;background:#000"></div>
<div style="position:absolute;left:436px;top:316px;width:33px;height:20px;box-sizing:border-box;border:1px solid #808080;background:#fff"></div><div style="position:absolute;left:451px;top:318px;width:1px;height:16px;box-sizing:border-box;background:#6a6a6a"></div><div style="position:absolute;left:453px;top:319px;width:13px;height:14px;box-sizing:border-box;background:linear-gradient(#f4f4f4,#ededed 45%,#dcdcdc 55%,#d0d0d0)"></div><div style="position:absolute;left:456px;top:325px;width:7px;height:1px;box-sizing:border-box;background:#000"></div><div style="position:absolute;left:457px;top:326px;width:5px;height:1px;box-sizing:border-box;background:#000"></div><div style="position:absolute;left:458px;top:327px;width:3px;height:1px;box-sizing:border-box;background:#000"></div><div style="position:absolute;left:459px;top:328px;width:1px;height:1px;box-sizing:border-box;background:#000"></div>
<div style="position:absolute;left:474px;top:316px;width:133px;height:20px;box-sizing:border-box;border:1px solid #808080;background:#fff"></div><div style="position:absolute;left:589px;top:318px;width:1px;height:16px;box-sizing:border-box;background:#6a6a6a"></div><div style="position:absolute;left:591px;top:319px;width:13px;height:14px;box-sizing:border-box;background:linear-gradient(#f4f4f4,#ededed 45%,#dcdcdc 55%,#d0d0d0)"></div><div style="position:absolute;left:594px;top:325px;width:7px;height:1px;box-sizing:border-box;background:#000"></div><div style="position:absolute;left:595px;top:326px;width:5px;height:1px;box-sizing:border-box;background:#000"></div><div style="position:absolute;left:596px;top:327px;width:3px;height:1px;box-sizing:border-box;background:#000"></div><div style="position:absolute;left:597px;top:328px;width:1px;height:1px;box-sizing:border-box;background:#000"></div>
<div style="position:absolute;left:614px;top:316px;width:33px;height:20px;box-sizing:border-box;border:1px solid #808080;background:#fff"></div>
<div class="t" style="left:637px;top:319px;font-size:11px;color:#000;">0</div>
<div style="position:absolute;left:652px;top:316px;width:49px;height:20px;box-sizing:border-box;border:1px solid #808080;background:#fff"></div>
<div style="position:absolute;left:707px;top:316px;width:58px;height:20px;box-sizing:border-box;border:1px solid #808080;background:#fff"></div>
<div style="position:absolute;left:768px;top:316px;width:75px;height:20px;box-sizing:border-box;border:1px solid #808080;background:#fff"></div><div style="position:absolute;left:825px;top:318px;width:1px;height:16px;box-sizing:border-box;background:#6a6a6a"></div><div style="position:absolute;left:827px;top:319px;width:13px;height:14px;box-sizing:border-box;background:linear-gradient(#f4f4f4,#ededed 45%,#dcdcdc 55%,#d0d0d0)"></div><div style="position:absolute;left:830px;top:325px;width:7px;height:1px;box-sizing:border-box;background:#000"></div><div style="position:absolute;left:831px;top:326px;width:5px;height:1px;box-sizing:border-box;background:#000"></div><div style="position:absolute;left:832px;top:327px;width:3px;height:1px;box-sizing:border-box;background:#000"></div><div style="position:absolute;left:833px;top:328px;width:1px;height:1px;box-sizing:border-box;background:#000"></div>
<div style="position:absolute;left:847px;top:316px;width:73px;height:20px;box-sizing:border-box;border:1px solid #808080;background:#fff"></div><div style="position:absolute;left:902px;top:318px;width:1px;height:16px;box-sizing:border-box;background:#6a6a6a"></div><div style="position:absolute;left:904px;top:319px;width:13px;height:14px;box-sizing:border-box;background:linear-gradient(#f4f4f4,#ededed 45%,#dcdcdc 55%,#d0d0d0)"></div><div style="position:absolute;left:907px;top:325px;width:7px;height:1px;box-sizing:border-box;background:#000"></div><div style="position:absolute;left:908px;top:326px;width:5px;height:1px;box-sizing:border-box;background:#000"></div><div style="position:absolute;left:909px;top:327px;width:3px;height:1px;box-sizing:border-box;background:#000"></div><div style="position:absolute;left:910px;top:328px;width:1px;height:1px;box-sizing:border-box;background:#000"></div>
<div style="position:absolute;left:923px;top:316px;width:53px;height:20px;box-sizing:border-box;border:1px solid #808080;background:#fff"></div><div style="position:absolute;left:958px;top:318px;width:1px;height:16px;box-sizing:border-box;background:#6a6a6a"></div><div style="position:absolute;left:960px;top:319px;width:13px;height:14px;box-sizing:border-box;background:linear-gradient(#f4f4f4,#ededed 45%,#dcdcdc 55%,#d0d0d0)"></div><div style="position:absolute;left:963px;top:325px;width:7px;height:1px;box-sizing:border-box;background:#000"></div><div style="position:absolute;left:964px;top:326px;width:5px;height:1px;box-sizing:border-box;background:#000"></div><div style="position:absolute;left:965px;top:327px;width:3px;height:1px;box-sizing:border-box;background:#000"></div><div style="position:absolute;left:966px;top:328px;width:1px;height:1px;box-sizing:border-box;background:#000"></div>
<div class="t" style="left:111px;top:173px;font-size:12.6px;color:#000;">药品名称</div>
<div class="t" style="left:286px;top:173px;font-size:12.6px;color:#000;">药品规格</div>
<div class="t" style="left:386px;top:173px;font-size:12.6px;color:#000;">剂型</div>
<div class="t" style="left:437px;top:173px;font-size:12.6px;color:#000;">单位</div>
<div class="t" style="left:518px;top:173px;font-size:12.6px;color:#000;">生产厂家</div>
<div class="t" style="left:616px;top:173px;font-size:12.6px;color:#000;">数量</div>
<div class="t" style="left:663px;top:173px;font-size:12.6px;color:#000;">单价</div>
<div class="t" style="left:722px;top:173px;font-size:12.6px;color:#000;">金额</div>
<div class="t" style="left:792px;top:173px;font-size:12.6px;color:#000;">批号</div>
<div class="t" style="left:858px;top:173px;font-size:12.6px;color:#000;">有效期至</div>
<div class="t" style="left:925px;top:173px;font-size:12.6px;color:#000;">质量状况</div>
<div class="t" style="left:106px;top:348px;font-size:13px;color:#000;">小计</div><div style="position:absolute;left:139px;top:353px;width:2px;height:2px;box-sizing:border-box;background:#000"></div><div style="position:absolute;left:139px;top:359px;width:2px;height:2px;box-sizing:border-box;background:#000"></div>
<div class="t" style="left:253px;top:350px;font-size:12px;color:#000;">元整</div>
<div style="position:absolute;left:27px;top:165px;width:952px;height:1px;box-sizing:border-box;background:#000"></div>
<div style="position:absolute;left:27px;top:194px;width:952px;height:1px;box-sizing:border-box;background:#000"></div>
<div style="position:absolute;left:27px;top:218px;width:952px;height:1px;box-sizing:border-box;background:#000"></div>
<div style="position:absolute;left:27px;top:242px;width:952px;height:1px;box-sizing:border-box;background:#000"></div>
<div style="position:absolute;left:27px;top:266px;width:952px;height:1px;box-sizing:border-box;background:#000"></div>
<div style="position:absolute;left:27px;top:290px;width:952px;height:1px;box-sizing:border-box;background:#000"></div>
<div style="position:absolute;left:27px;top:314px;width:952px;height:1px;box-sizing:border-box;background:#000"></div>
<div style="position:absolute;left:27px;top:338px;width:952px;height:1px;box-sizing:border-box;background:#000"></div>
<div style="position:absolute;left:27px;top:366px;width:952px;height:1px;box-sizing:border-box;background:#000"></div>
<div style="position:absolute;left:27px;top:165px;width:1px;height:202px;box-sizing:border-box;background:#000"></div>
<div style="position:absolute;left:250px;top:165px;width:1px;height:202px;box-sizing:border-box;background:#000"></div>
<div style="position:absolute;left:370px;top:165px;width:1px;height:174px;box-sizing:border-box;background:#000"></div>
<div style="position:absolute;left:434px;top:165px;width:1px;height:174px;box-sizing:border-box;background:#000"></div>
<div style="position:absolute;left:470px;top:165px;width:1px;height:174px;box-sizing:border-box;background:#000"></div>
<div style="position:absolute;left:610px;top:165px;width:1px;height:202px;box-sizing:border-box;background:#000"></div>
<div style="position:absolute;left:650px;top:165px;width:1px;height:174px;box-sizing:border-box;background:#000"></div>
<div style="position:absolute;left:704px;top:165px;width:1px;height:174px;box-sizing:border-box;background:#000"></div>
<div style="position:absolute;left:766px;top:165px;width:1px;height:174px;box-sizing:border-box;background:#000"></div>
<div style="position:absolute;left:845px;top:165px;width:1px;height:174px;box-sizing:border-box;background:#000"></div>
<div style="position:absolute;left:921px;top:165px;width:1px;height:174px;box-sizing:border-box;background:#000"></div>
<div style="position:absolute;left:978px;top:165px;width:1px;height:202px;box-sizing:border-box;background:#000"></div>
<div style="position:absolute;left:617px;top:341px;width:121px;height:25px;box-sizing:border-box;background:#888888"></div><div style="position:absolute;left:619px;top:344px;width:8px;height:18px;box-sizing:border-box;background:#fff"></div><div style="position:absolute;left:629px;top:342px;width:1px;height:24px;box-sizing:border-box;background:#f4f4f4"></div><div style="position:absolute;left:630px;top:344px;width:8px;height:18px;box-sizing:border-box;background:linear-gradient(90deg,#dcdcdc,#fff 30%)"></div><div style="position:absolute;left:640px;top:342px;width:1px;height:24px;box-sizing:border-box;background:#f4f4f4"></div><div style="position:absolute;left:641px;top:344px;width:8px;height:18px;box-sizing:border-box;background:linear-gradient(90deg,#dcdcdc,#fff 30%)"></div><div style="position:absolute;left:651px;top:342px;width:1px;height:24px;box-sizing:border-box;background:#f4f4f4"></div><div style="position:absolute;left:652px;top:344px;width:8px;height:18px;box-sizing:border-box;background:linear-gradient(90deg,#dcdcdc,#fff 30%)"></div><div style="position:absolute;left:662px;top:342px;width:1px;height:24px;box-sizing:border-box;background:#f4f4f4"></div><div style="position:absolute;left:663px;top:344px;width:8px;height:18px;box-sizing:border-box;background:linear-gradient(90deg,#dcdcdc,#fff 30%)"></div><div style="position:absolute;left:673px;top:342px;width:1px;height:24px;box-sizing:border-box;background:#f4f4f4"></div><div style="position:absolute;left:674px;top:344px;width:8px;height:18px;box-sizing:border-box;background:linear-gradient(90deg,#dcdcdc,#fff 30%)"></div><div style="position:absolute;left:684px;top:342px;width:1px;height:24px;box-sizing:border-box;background:#f4f4f4"></div><div style="position:absolute;left:685px;top:344px;width:8px;height:18px;box-sizing:border-box;background:linear-gradient(90deg,#dcdcdc,#fff 30%)"></div><div style="position:absolute;left:695px;top:342px;width:1px;height:24px;box-sizing:border-box;background:#f4f4f4"></div><div style="position:absolute;left:696px;top:344px;width:8px;height:18px;box-sizing:border-box;background:linear-gradient(90deg,#dcdcdc,#fff 30%)"></div><div style="position:absolute;left:706px;top:342px;width:1px;height:24px;box-sizing:border-box;background:#f4f4f4"></div><div style="position:absolute;left:707px;top:344px;width:8px;height:18px;box-sizing:border-box;background:linear-gradient(90deg,#dcdcdc,#fff 30%)"></div><div style="position:absolute;left:717px;top:342px;width:1px;height:24px;box-sizing:border-box;background:#f4f4f4"></div><div style="position:absolute;left:718px;top:344px;width:8px;height:18px;box-sizing:border-box;background:linear-gradient(90deg,#dcdcdc,#fff 30%)"></div><div style="position:absolute;left:728px;top:342px;width:1px;height:24px;box-sizing:border-box;background:#f4f4f4"></div><div style="position:absolute;left:729px;top:344px;width:8px;height:18px;box-sizing:border-box;background:linear-gradient(90deg,#dcdcdc,#fff 30%)"></div><div style="position:absolute;left:651px;top:342px;width:1px;height:24px;box-sizing:border-box;background:#000"></div><div style="position:absolute;left:684px;top:342px;width:1px;height:24px;box-sizing:border-box;background:#000"></div><div style="position:absolute;left:717px;top:342px;width:2px;height:24px;box-sizing:border-box;background:#c04444"></div>
<div style="position:absolute;left:617px;top:367px;width:121px;height:25px;box-sizing:border-box;background:#888888"></div><div style="position:absolute;left:619px;top:370px;width:8px;height:18px;box-sizing:border-box;background:#fff"></div><div style="position:absolute;left:629px;top:368px;width:1px;height:24px;box-sizing:border-box;background:#f4f4f4"></div><div style="position:absolute;left:630px;top:370px;width:8px;height:18px;box-sizing:border-box;background:linear-gradient(90deg,#dcdcdc,#fff 30%)"></div><div style="position:absolute;left:640px;top:368px;width:1px;height:24px;box-sizing:border-box;background:#f4f4f4"></div><div style="position:absolute;left:641px;top:370px;width:8px;height:18px;box-sizing:border-box;background:linear-gradient(90deg,#dcdcdc,#fff 30%)"></div><div style="position:absolute;left:651px;top:368px;width:1px;height:24px;box-sizing:border-box;background:#f4f4f4"></div><div style="position:absolute;left:652px;top:370px;width:8px;height:18px;box-sizing:border-box;background:linear-gradient(90deg,#dcdcdc,#fff 30%)"></div><div style="position:absolute;left:662px;top:368px;width:1px;height:24px;box-sizing:border-box;background:#f4f4f4"></div><div style="position:absolute;left:663px;top:370px;width:8px;height:18px;box-sizing:border-box;background:linear-gradient(90deg,#dcdcdc,#fff 30%)"></div><div style="position:absolute;left:673px;top:368px;width:1px;height:24px;box-sizing:border-box;background:#f4f4f4"></div><div style="position:absolute;left:674px;top:370px;width:8px;height:18px;box-sizing:border-box;background:linear-gradient(90deg,#dcdcdc,#fff 30%)"></div><div style="position:absolute;left:684px;top:368px;width:1px;height:24px;box-sizing:border-box;background:#f4f4f4"></div><div style="position:absolute;left:685px;top:370px;width:8px;height:18px;box-sizing:border-box;background:linear-gradient(90deg,#dcdcdc,#fff 30%)"></div><div style="position:absolute;left:695px;top:368px;width:1px;height:24px;box-sizing:border-box;background:#f4f4f4"></div><div style="position:absolute;left:696px;top:370px;width:8px;height:18px;box-sizing:border-box;background:linear-gradient(90deg,#dcdcdc,#fff 30%)"></div><div style="position:absolute;left:706px;top:368px;width:1px;height:24px;box-sizing:border-box;background:#f4f4f4"></div><div style="position:absolute;left:707px;top:370px;width:8px;height:18px;box-sizing:border-box;background:linear-gradient(90deg,#dcdcdc,#fff 30%)"></div><div style="position:absolute;left:717px;top:368px;width:1px;height:24px;box-sizing:border-box;background:#f4f4f4"></div><div style="position:absolute;left:718px;top:370px;width:8px;height:18px;box-sizing:border-box;background:linear-gradient(90deg,#dcdcdc,#fff 30%)"></div><div style="position:absolute;left:728px;top:368px;width:1px;height:24px;box-sizing:border-box;background:#f4f4f4"></div><div style="position:absolute;left:729px;top:370px;width:8px;height:18px;box-sizing:border-box;background:linear-gradient(90deg,#dcdcdc,#fff 30%)"></div><div style="position:absolute;left:651px;top:368px;width:1px;height:24px;box-sizing:border-box;background:#000"></div><div style="position:absolute;left:684px;top:368px;width:1px;height:24px;box-sizing:border-box;background:#000"></div><div style="position:absolute;left:717px;top:368px;width:2px;height:24px;box-sizing:border-box;background:#c04444"></div>
<div style="position:absolute;left:633px;top:144px;width:128px;height:22px;box-sizing:border-box;background:#8a8a8a"></div>
<div style="position:absolute;left:636px;top:144px;width:43px;height:19px;box-sizing:border-box;border-radius:0 0 3px 3px;background:linear-gradient(#f4f4f4,#ececec 40%,#dedede 50%,#d4d4d4 90%,#e8e8e8)"></div>
<div class="t" style="left:639px;top:145px;font-size:14px;color:#000;">2021</div>
<div style="position:absolute;left:680px;top:144px;width:30px;height:19px;box-sizing:border-box;border-radius:0 0 3px 3px;background:linear-gradient(#f4f4f4,#ececec 40%,#dedede 50%,#d4d4d4 90%,#e8e8e8)"></div>
<div class="t" style="left:683px;top:145px;font-size:14px;color:#000;">02</div>
<div style="position:absolute;left:711px;top:144px;width:28px;height:19px;box-sizing:border-box;border-radius:0 0 3px 3px;background:linear-gradient(#f4f4f4,#ececec 40%,#dedede 50%,#d4d4d4 90%,#e8e8e8)"></div>
<div class="t" style="left:714px;top:145px;font-size:14px;color:#000;">12</div>
<div style="position:absolute;left:741px;top:145px;width:17px;height:17px;box-sizing:border-box;border-radius:3px;border:1px solid #c8c8c8;background:linear-gradient(#f8f8f8,#e4e4e4 50%,#d4d4d4)"></div>
<div class="t" style="left:743px;top:146px;font-size:12px;color:#000;">今</div>
<div class="t" style="left:29px;top:375px;font-size:14px;color:#000;letter-spacing:0.6px">合计大写</div><div style="position:absolute;left:92px;top:381px;width:2px;height:2px;box-sizing:border-box;background:#000"></div><div style="position:absolute;left:92px;top:387px;width:2px;height:2px;box-sizing:border-box;background:#000"></div>
<div class="t" style="left:103px;top:375px;font-size:14px;color:#000;letter-spacing:0.6px">元整</div>
<div class="t" style="left:561px;top:372px;font-size:13px;color:#000;letter-spacing:0.6px">合计</div><div style="position:absolute;left:593px;top:377px;width:2px;height:2px;box-sizing:border-box;background:#000"></div><div style="position:absolute;left:593px;top:383px;width:2px;height:2px;box-sizing:border-box;background:#000"></div>
<div class="t" style="left:30px;top:398px;font-size:14px;color:#000;letter-spacing:0.6px">制单人</div><div style="position:absolute;left:78px;top:404px;width:2px;height:2px;box-sizing:border-box;background:#000"></div><div style="position:absolute;left:78px;top:410px;width:2px;height:2px;box-sizing:border-box;background:#000"></div>
<div style="position:absolute;left:86px;top:396px;width:65px;height:23px;box-sizing:border-box;border:1px solid #808080;background:#fff"></div><div style="position:absolute;left:133px;top:398px;width:1px;height:19px;box-sizing:border-box;background:#6a6a6a"></div><div style="position:absolute;left:135px;top:399px;width:13px;height:17px;box-sizing:border-box;background:linear-gradient(#f4f4f4,#ededed 45%,#dcdcdc 55%,#d0d0d0)"></div><div style="position:absolute;left:138px;top:406px;width:7px;height:1px;box-sizing:border-box;background:#000"></div><div style="position:absolute;left:139px;top:407px;width:5px;height:1px;box-sizing:border-box;background:#000"></div><div style="position:absolute;left:140px;top:408px;width:3px;height:1px;box-sizing:border-box;background:#000"></div><div style="position:absolute;left:141px;top:409px;width:1px;height:1px;box-sizing:border-box;background:#000"></div>
<div class="t" style="left:229px;top:398px;font-size:14px;color:#000;letter-spacing:0.6px">发货人</div><div style="position:absolute;left:278px;top:404px;width:2px;height:2px;box-sizing:border-box;background:#000"></div><div style="position:absolute;left:278px;top:410px;width:2px;height:2px;box-sizing:border-box;background:#000"></div>
<div style="position:absolute;left:283px;top:396px;width:66px;height:23px;box-sizing:border-box;border:1px solid #808080;background:#fff"></div><div style="position:absolute;left:331px;top:398px;width:1px;height:19px;box-sizing:border-box;background:#6a6a6a"></div><div style="position:absolute;left:333px;top:399px;width:13px;height:17px;box-sizing:border-box;background:linear-gradient(#f4f4f4,#ededed 45%,#dcdcdc 55%,#d0d0d0)"></div><div style="position:absolute;left:336px;top:406px;width:7px;height:1px;box-sizing:border-box;background:#000"></div><div style="position:absolute;left:337px;top:407px;width:5px;height:1px;box-sizing:border-box;background:#000"></div><div style="position:absolute;left:338px;top:408px;width:3px;height:1px;box-sizing:border-box;background:#000"></div><div style="position:absolute;left:339px;top:409px;width:1px;height:1px;box-sizing:border-box;background:#000"></div>
<div class="t" style="left:432px;top:398px;font-size:14px;color:#000;letter-spacing:0.6px">收款</div><div style="position:absolute;left:464px;top:404px;width:2px;height:2px;box-sizing:border-box;background:#000"></div><div style="position:absolute;left:464px;top:410px;width:2px;height:2px;box-sizing:border-box;background:#000"></div>
<div style="position:absolute;left:471px;top:396px;width:65px;height:23px;box-sizing:border-box;border:1px solid #808080;background:#fff"></div><div style="position:absolute;left:518px;top:398px;width:1px;height:19px;box-sizing:border-box;background:#6a6a6a"></div><div style="position:absolute;left:520px;top:399px;width:13px;height:17px;box-sizing:border-box;background:linear-gradient(#f4f4f4,#ededed 45%,#dcdcdc 55%,#d0d0d0)"></div><div style="position:absolute;left:523px;top:406px;width:7px;height:1px;box-sizing:border-box;background:#000"></div><div style="position:absolute;left:524px;top:407px;width:5px;height:1px;box-sizing:border-box;background:#000"></div><div style="position:absolute;left:525px;top:408px;width:3px;height:1px;box-sizing:border-box;background:#000"></div><div style="position:absolute;left:526px;top:409px;width:1px;height:1px;box-sizing:border-box;background:#000"></div>
<div class="t" style="left:760px;top:395px;font-size:12px;color:#000;">共</div>
<div style="position:absolute;left:775px;top:392px;width:17px;height:20px;box-sizing:border-box;border:1px solid #8a8a8a;background:#fff"></div>
<div class="t" style="left:794px;top:395px;font-size:12px;color:#000;">页</div>
<div class="t" style="left:828px;top:395px;font-size:12px;color:#000;">第</div>
<div style="position:absolute;left:842px;top:392px;width:18px;height:20px;box-sizing:border-box;border:1px solid #8a8a8a;background:#fff"></div>
<div class="t" style="left:861px;top:395px;font-size:12px;color:#000;">页</div>
<div class="t" style="left:15px;top:281px;font-size:16px;color:#2222c4;letter-spacing:0.3px">飚风</div>
<div class="t" style="left:62px;top:281px;font-size:16px;color:#2222c4;letter-spacing:0.3px">送货单打印软件</div>
<div class="t" style="left:180px;top:281px;font-size:16px;color:#2222c4;letter-spacing:0.3px">专业版</div>
<div class="t" style="left:261px;top:281px;font-size:16px;color:#2222c4;letter-spacing:0.3px">苏州飚风软件有限公司出品</div>
<div class="t" style="left:483px;top:281px;font-size:16px;color:#2222c4;letter-spacing:0.3px">专用模版</div>
<div class="t" style="left:47px;top:282px;font-size:14px;color:#2222c4;">™</div>
<div class="t" style="left:174px;top:281px;font-size:16px;color:#2222c4;">[</div>
<div class="t" style="left:228px;top:281px;font-size:16px;color:#2222c4;">]</div>
<div class="t" style="left:246px;top:281px;font-size:16px;color:#2222c4;">|</div>
<div class="t" style="left:251px;top:281px;font-size:16px;color:#2222c4;">&lt;</div>
<div class="t" style="left:455px;top:281px;font-size:16px;color:#2222c4;">&gt;</div>
<div class="t" style="left:467px;top:281px;font-size:16px;color:#2222c4;">|</div>
<div class="t" style="left:472px;top:281px;font-size:16px;color:#2222c4;">--</div>
<div class="t" style="left:15px;top:322px;font-size:16px;color:#2222c4;letter-spacing:0.1px">生成日期</div>
<div class="t" style="left:80px;top:322px;font-size:16.5px;color:#2222c4;">:2021/2/12</div>
</body></html>
